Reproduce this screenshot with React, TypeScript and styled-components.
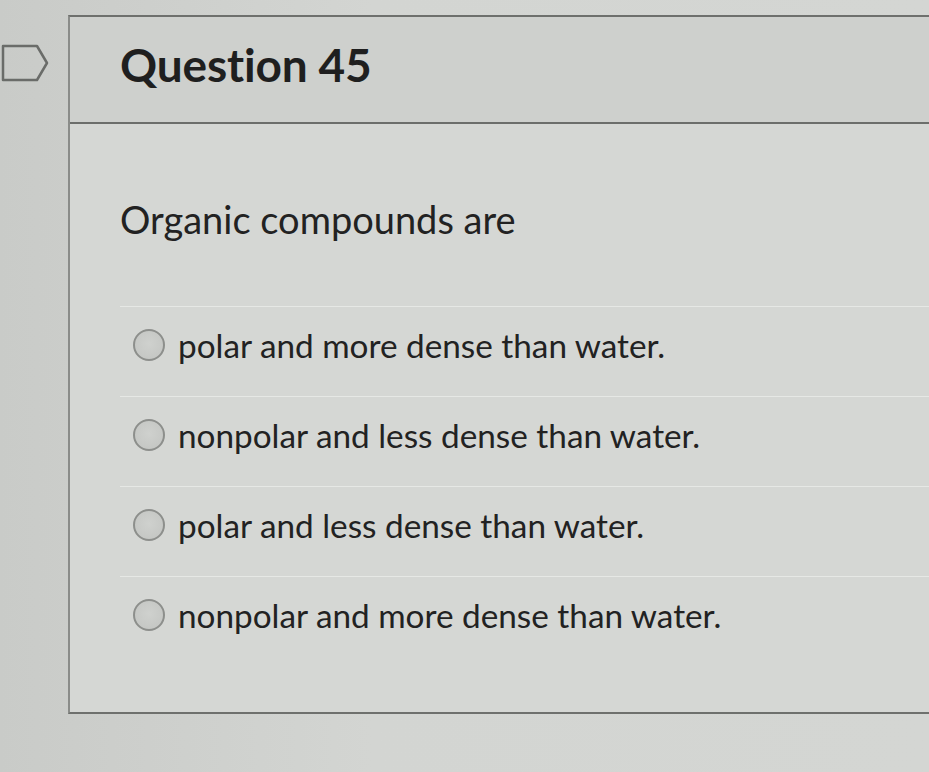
import React from "react";
import styled, { createGlobalStyle } from "styled-components";

const Global = createGlobalStyle`
  html, body { margin: 0; padding: 0; background: #cfd1ce; }
  body { font-family: Lato, "Open Sans", sans-serif; color: #232323; overflow: hidden; }
`;

const Page = styled.div`
  display: flex;
  width: 929px;
  height: 772px;
  background: linear-gradient(90deg, #c9cbc8 0%, #d3d5d2 40%, #d4d6d3 100%);
  overflow: hidden;
`;

const FlagColumn = styled.div`
  width: 68px;
  flex: none;
  padding-top: 44px;
  box-sizing: border-box;
`;

const Panel = styled.section`
  flex: 1;
  margin-top: 15px;
  height: 699px;
  border-top: 2px solid #6e706d;
  border-left: 2px solid #8a8c89;
  border-bottom: 2px solid #6e706d;
  box-sizing: border-box;
  display: flex;
  flex-direction: column;
  background: #d5d7d4;
`;

const Header = styled.header`
  height: 107px;
  flex: none;
  display: flex;
  align-items: center;
  padding-left: 50px;
  padding-bottom: 10px;
  box-sizing: border-box;
  border-bottom: 2px solid #6c6e6b;
  background: #ced0cd;
`;

const Title = styled.h2`
  margin: 0;
  font-size: 46px;
  font-weight: 700;
  color: #1f1f1f;
  letter-spacing: -0.15px;
`;

const Body = styled.div`
  padding: 71px 0 0 50px;
  display: flex;
  flex-direction: column;
`;

const Prompt = styled.p`
  margin: 0;
  font-size: 38px;
  line-height: 48px;
  font-weight: 400;
  color: #222;
`;

const Options = styled.div`
  margin-top: 63px;
  display: flex;
  flex-direction: column;
`;

const Option = styled.label`
  height: 90px;
  display: flex;
  align-items: center;
  gap: 13px;
  padding-left: 13px;
  padding-bottom: 14px;
  box-sizing: border-box;
  border-top: 1px solid #e6e8e5;
  font-size: 33.3px;
  color: #222;
`;

const Radio = styled.span`
  width: 32px;
  height: 32px;
  border-radius: 50%;
  border: 2px solid #8d8f8c;
  background: radial-gradient(circle at 50% 45%, #cfd1ce 0%, #c2c4c1 100%);
  box-sizing: border-box;
  flex: none;
`;

const answers = [
  "polar and more dense than water.",
  "nonpolar and less dense than water.",
  "polar and less dense than water.",
  "nonpolar and more dense than water.",
];

export default function App() {
  return (
    <>
      <Global />
      <Page>
        <FlagColumn>
          <svg width="52" height="40" viewBox="0 0 52 40">
            <path d="M3 2 H37 L47 19 L37 36 H3 Z" fill="none" stroke="#6a6c69" strokeWidth="2.5" strokeLinejoin="round" />
          </svg>
        </FlagColumn>
        <Panel>
          <Header>
            <Title>Question 45</Title>
          </Header>
          <Body>
            <Prompt>Organic compounds are</Prompt>
            <Options>
              {answers.map((a) => (
                <Option key={a}>
                  <Radio />
                  {a}
                </Option>
              ))}
            </Options>
          </Body>
        </Panel>
      </Page>
    </>
  );
}
